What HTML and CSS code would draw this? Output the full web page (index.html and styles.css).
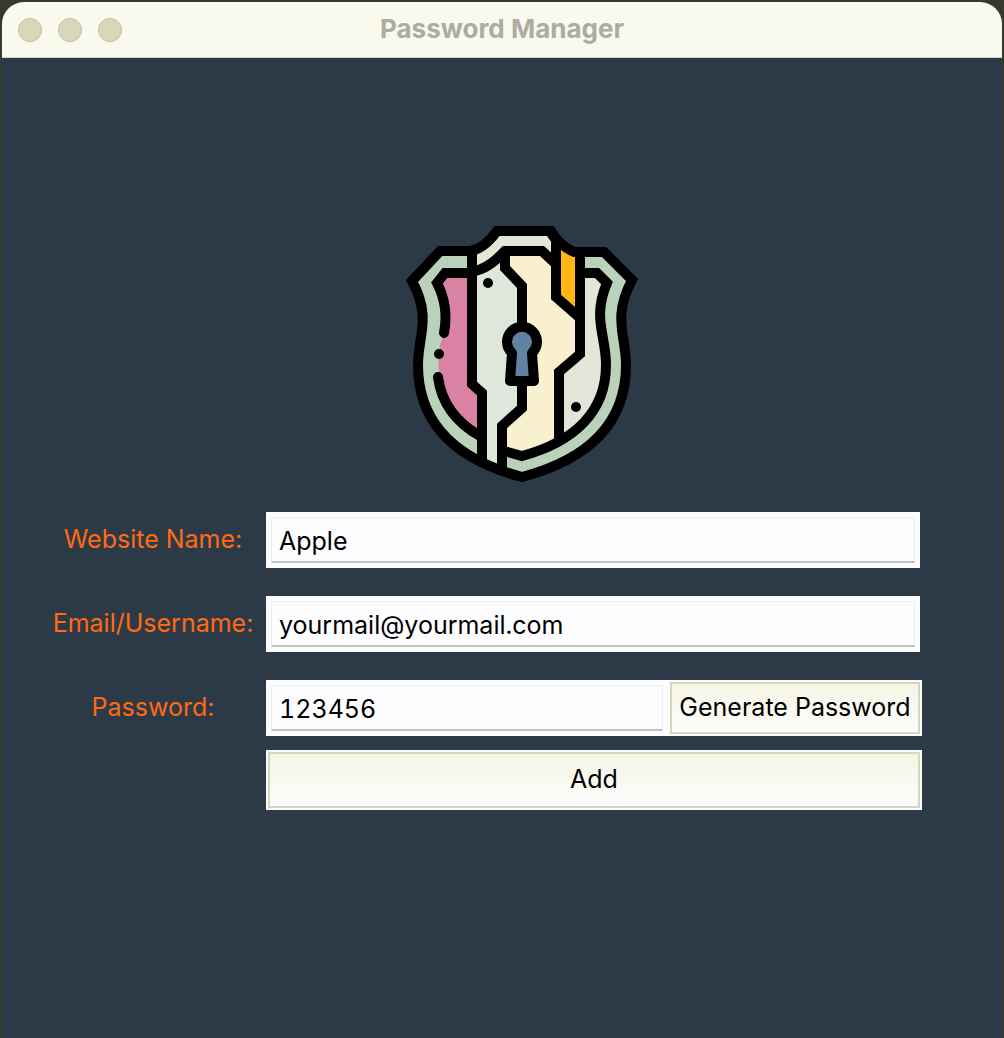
FILE: index.html
```html
<!DOCTYPE html>
<html lang="en">
<head>
<meta charset="utf-8">
<meta name="viewport" content="width=device-width, initial-scale=1">
<title>Password Manager</title>
<link rel="stylesheet" href="styles.css">
</head>
<body>
<div class="window">
  <header class="titlebar">
    <div class="controls">
      <button class="control" type="button" aria-label="Close"></button>
      <button class="control" type="button" aria-label="Minimize"></button>
      <button class="control" type="button" aria-label="Zoom"></button>
    </div>
    <h1 class="title">Password Manager</h1>
  </header>
  <main class="content">
    <svg class="logo" viewBox="400 220 244 268" role="img" aria-label="Shield with keyhole">
      <path fill="#b9d2b9" d="M412 281L440 251H470Q484 249 497 231H551Q560 246 574 252H604L632 280C612 318 626 335 626 365C626 425 586 460 522 477C458 460 418 425 418 365C418 335 432 318 412 281Z"/>
      <path fill="#e2e8d6" d="M472 252Q485 248 497 231H551L556 264L542 251H505Q490 271 472 272Z"/>
      <path fill="#d982a4" d="M472 273H445L437 283Q452 315 440 345Q430 400 482 437V393L472 384Z"/>
      <path fill="#dfe6dc" d="M472 272Q490 270 505 251V268L522 286V408L502 426V470L482 464V393L472 384Z"/>
      <path fill="#f8f0cf" d="M505 251H542L556 264V297L580 318V354L559 372V440L522 457L502 451V426L522 408V286L505 268Z"/>
      <path fill="#e2e5d8" d="M580 274H597L607 283C592 318 606 335 606 365Q606 415 559 440V372L580 354Z"/>
      <path fill="#ffb612" d="M556 245L580 255V318L556 297Z"/>
      <g class="logo-lines">
        <path d="M412 281L440 251H470Q484 249 497 231H551Q560 246 574 252H604L632 280C612 318 626 335 626 365C626 425 586 460 522 477C458 460 418 425 418 365C418 335 432 318 412 281Z"/>
        <path d="M472 252V384L482 393V460"/>
        <path d="M472 273H445L437 283Q449 306 444 333"/>
        <path d="M438 377Q443 415 480 436"/>
        <path d="M474 271Q488 269 505 251H542L556 264"/>
        <path d="M505 252V268L522 286V326"/>
        <path d="M522 382V408L502 426V468"/>
        <path d="M551 233L556 240V297L580 318"/>
        <path d="M580 253V354L559 372V440"/>
        <path d="M582 273H597L607 283C592 318 606 335 606 365C606 412 574 442 522 456L504 451"/>
      </g>
      <path class="keyhole" d="M512 353A15 15 0 1 1 532 353L534 381H510Z"/>
      <circle cx="488" cy="283" r="5"/>
      <circle cx="439" cy="354" r="5"/>
      <circle cx="576" cy="407" r="5"/>
    </svg>
    <form class="form">
      <label class="label" for="website">Website Name:</label>
      <div class="field"><input class="input" id="website" type="text" value="Apple"></div>
      <label class="label" for="email">Email/Username:</label>
      <div class="field"><input class="input" id="email" type="text" value="yourmail@yourmail.com"></div>
      <label class="label" for="password">Password:</label>
      <div class="actions">
        <div class="password-row">
          <div class="field"><input class="input" id="password" type="text" value="123456"></div>
          <button class="button" type="button">Generate Password</button>
        </div>
        <button class="button button-add" type="button">Add</button>
      </div>
    </form>
  </main>
</div>
</body>
</html>
```
FILE: styles.css
```css
* {
  box-sizing: border-box;
}

body {
  margin: 0;
  background: #37382f;
  color: #000;
  font-family: Inter, "Liberation Sans", sans-serif;
  font-size: 25px;
}

.window {
  display: flex;
  flex-direction: column;
  min-height: 100vh;
  padding: 2px 2px 0;
}

.titlebar {
  display: grid;
  grid-template-columns: 1fr auto 1fr;
  align-items: center;
  height: 56px;
  padding: 0 16px;
  border-bottom: 1px solid #d5d5cb;
  border-radius: 22px 22px 0 0;
  background: #f9f9ee;
}

.controls {
  display: flex;
  gap: 16px;
}

.control {
  width: 24px;
  height: 24px;
  padding: 0;
  border: 1px solid #bdbda5;
  border-radius: 50%;
  background: #d8d8b8;
}

.title {
  margin: 0;
  color: #acaca2;
  font-size: 26px;
  font-weight: 700;
  line-height: 32px;
  padding-bottom: 2px;
}

.content {
  flex: 1;
  display: flex;
  flex-direction: column;
  align-items: center;
  gap: 24px;
  padding: 162px 80px 48px 48px;
  background: #2c3a47;
}

.logo {
  width: 244px;
  height: 268px;
  margin-left: 72px;
}

.logo-lines {
  fill: none;
  stroke: #000;
  stroke-width: 10px;
  stroke-linecap: round;
  stroke-linejoin: miter;
}

.keyhole {
  fill: #5f83a0;
  stroke: #000;
  stroke-width: 10px;
  stroke-linejoin: round;
}

.form {
  display: grid;
  grid-template-columns: 206px 1fr;
  align-items: start;
  gap: 28px 10px;
  width: 100%;
}

.label {
  color: #ff6a13;
  line-height: 54px;
  text-align: center;
}

.field {
  height: 56px;
  padding: 5px;
  background: #fdfcff;
}

.form > .field {
  margin-right: 2px;
}

.input {
  width: 100%;
  height: 46px;
  padding: 2px 7px 0;
  border: 1px solid #eeeef0;
  border-bottom: 2px solid #c2c2c2;
  background: #fdfcff;
  color: #000;
  font: inherit;
  font-variant-numeric: tabular-nums;
  outline: none;
}

.actions {
  display: grid;
  gap: 14px;
}

.password-row {
  display: grid;
  grid-template-columns: 1fr 254px;
}

.button {
  height: 56px;
  padding: 0 0 2px;
  border: 2px solid #fdfcff;
  box-shadow: inset 0 0 0 2px #d6d6bc;
  background: linear-gradient(#f5f5e2, #fdfcff);
  color: #000;
  font: inherit;
  white-space: nowrap;
}

.button-add {
  height: 60px;
}
```
